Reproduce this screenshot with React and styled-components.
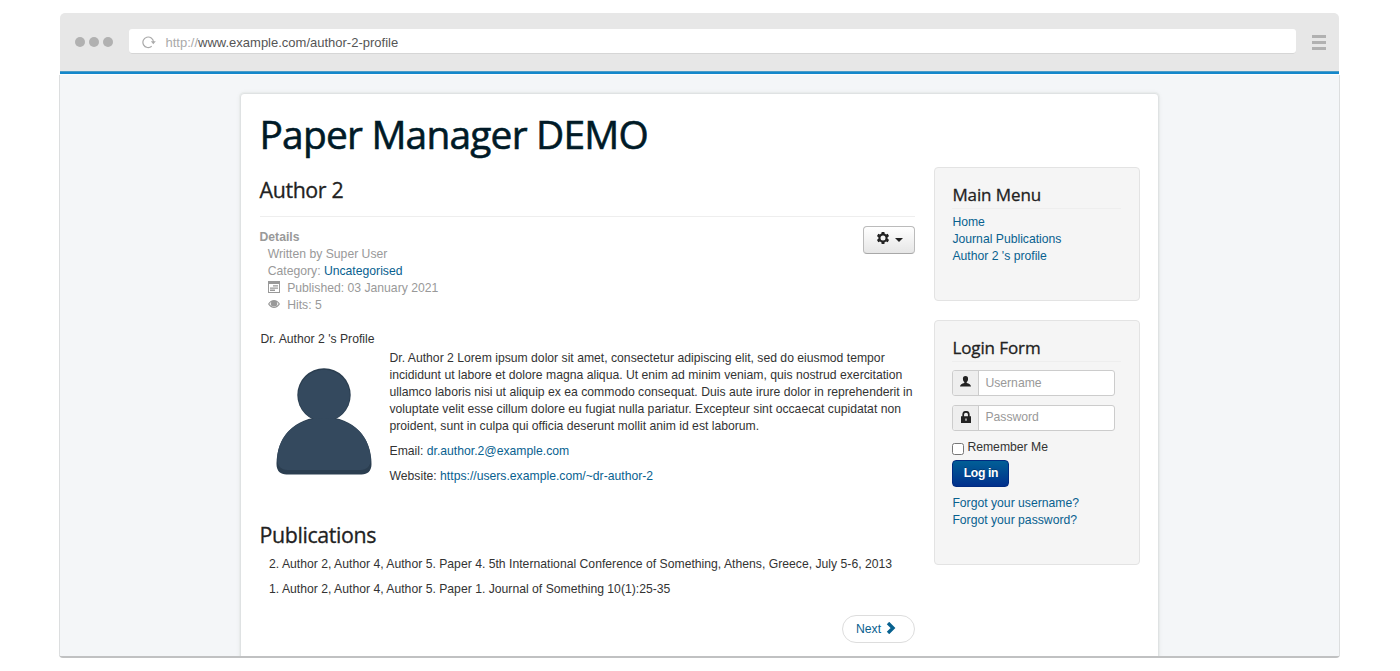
import React from 'react';
import styled, { createGlobalStyle } from 'styled-components';

const link = '#08618f';
const sans = '"Liberation Sans", Arial, Helvetica, sans-serif';
const heading = '"Open Sans", sans-serif';

const Global = createGlobalStyle`
  *, *::before, *::after { box-sizing: border-box; }
  html, body { margin: 0; background: #fff; }
  body { height: 671px; overflow: hidden; font: 12.2px/16.9px ${sans}; color: #333; }
  a { color: ${link}; text-decoration: none; }
  svg { display: block; flex: none; }
  p { margin: 0; white-space: nowrap; }
`;

const Browser = styled.div`
  width: 1281px;
  height: 645px;
  margin: 13px 0 0 59px;
  display: flex;
  flex-direction: column;
  border-bottom: 2px solid #c0c1c2;
  border-radius: 5px 5px 4px 4px;
  overflow: hidden;
`;
const Toolbar = styled.header`
  height: 58px;
  flex: none;
  margin: 0 1px;
  display: flex;
  align-items: center;
  padding: 0 13px 2px 15px;
  background: #e7e7e7;
  border-radius: 5px 5px 0 0;
`;
const Dots = styled.div`
  display: flex;
  gap: 4px;
  margin: 2px 16px 0 0;
`;
const Dot = styled.i`
  width: 10px;
  height: 10px;
  border-radius: 50%;
  background: #b1b1b1;
`;
const Address = styled.div`
  flex: 1;
  height: 25px;
  display: flex;
  align-items: center;
  padding: 1px 0 0 13px;
  background: #fff;
  border-radius: 3px;
  box-shadow: inset 0 -1px 0 #d6d6d6;
  font-size: 13px;
  color: #555;
`;
const Url = styled.span`
  margin-left: 9.5px;
  padding-top: 3px;
`;
const Scheme = styled.span`
  color: #aaa;
`;
const Burger = styled.div`
  width: 14px;
  height: 15px;
  margin: 2px 0 0 16px;
  border-top: 3px solid #b1b1b1;
  border-bottom: 3px solid #b1b1b1;
  display: flex;
  align-items: center;
  &::before { content: ''; width: 14px; height: 3px; background: #b1b1b1; }
`;

const Viewport = styled.div`
  flex: 1;
  min-height: 0;
  display: flex;
  justify-content: center;
  padding-top: 18px;
  background: #f4f6f8;
  border: 1px solid #dcdedf;
  border-width: 0 1px;
  overflow: hidden;
`;
const Accent = styled.div`
  flex: none;
  height: 4px;
  margin: 0 1px;
  background: #1387cb;
  border-top: 1px solid #4a9cc6;
  border-bottom: 1px solid #fbfcfd;
`;
const Card = styled.div`
  width: 919px;
  height: 600px;
  flex: none;
  padding: 19px 19px 0 18.5px;
  background: #fff;
  border: 1px solid #dfe2e3;
  border-radius: 4px;
  box-shadow: 0 0 0 1px #e9ecec, 0 0 5px rgba(0, 0, 0, 0.06);
`;
const SiteTitle = styled.h1`
  margin: 0 0 12px;
  font: 400 38.9px/41px ${heading};
  letter-spacing: -0.79px;
  color: #001a27;
  -webkit-text-stroke: 0.6px #001a27;
  white-space: nowrap;
`;
const Columns = styled.div`
  display: flex;
  align-items: flex-start;
  justify-content: space-between;
`;
const Main = styled.main`
  width: 655px;
`;
const PageHeader = styled.div`
  height: 51px;
  padding-top: 5px;
  border-bottom: 1px solid #eee;
`;
const Heading = styled.h2`
  margin: 0;
  font: 400 21.4px/38px ${heading};
  letter-spacing: -0.38px;
  color: #222;
  -webkit-text-stroke: 0.3px #222;
  white-space: nowrap;
`;
const Meta = styled.section`
  display: flex;
  justify-content: space-between;
  align-items: flex-start;
  height: 114px;
  padding-top: 9px;
`;
const Details = styled.dl`
  margin: 3px 0 0;
  color: #999;
`;
const Term = styled.dt`
  font-weight: 700;
`;
const Detail = styled.dd`
  margin: 0 0 0 8.2px;
  display: flex;
  white-space: pre;
  svg { margin: ${(p) => p.$iconTop || 0} 7.5px 0 0; }
`;
const GearButton = styled.button`
  width: 52px;
  height: 28px;
  display: flex;
  align-items: center;
  gap: 6px;
  padding: 0 11px 4px 13px;
  border: 1px solid #bbb;
  border-bottom-color: #a8a8a8;
  border-radius: 4px;
  background: linear-gradient(#fff, #e6e6e6);
`;
const Caret = styled.i`
  margin-top: 4px;
  border: 4px solid transparent;
  border-width: 4px 4px 0;
  border-top-color: #222;
`;
const Profile = styled.section`
  height: 185px;
`;
const ProfileTitle = styled.p`
  padding-left: 0.9px;
`;
const ProfileBody = styled.div`
  display: flex;
  padding: 2px 0 0 16.5px;
`;
const Portrait = styled.div`
  width: 113.500px;
  padding-top: 18px;
`;
const Bio = styled.div`
  display: flex;
  flex-direction: column;
  gap: 8.4px;
`;
const Line = styled.span`
  display: block;
`;
const Publications = styled.ul`
  margin: 2px 0 0;
  padding: 0 0 0 9.5px;
  list-style: none;
  display: flex;
  flex-direction: column;
  gap: 8.4px;
  letter-spacing: 0.004px;
  white-space: nowrap;
`;
const Pager = styled.nav`
  display: flex;
  justify-content: flex-end;
  margin-top: 17px;
`;
const NextLink = styled.a`
  width: 73px;
  height: 28px;
  display: flex;
  align-items: center;
  gap: 5px;
  padding-left: 13.5px;
  border: 1px solid #ddd;
  border-radius: 14px;
  svg { margin-top: -2px; }
`;
const Aside = styled.aside`
  width: 206px;
  margin: 1px -1px 0 0;
  display: flex;
  flex-direction: column;
  gap: 19px;
`;
const Well = styled.section`
  height: ${(p) => p.$h}px;
  padding: 16px 18px 0 17.4px;
  background: #f5f5f5;
  border: 1px solid #e3e3e3;
  border-radius: 4px;
`;
const WellTitle = styled.h3`
  margin: 0 0 ${(p) => p.$gap || 5}px;
  height: 25px;
  border-bottom: 1px solid #eee;
  font: 400 17px/21px ${heading};
  letter-spacing: -0.1px;
  color: #222;
  -webkit-text-stroke: 0.3px #222;
  white-space: nowrap;
`;
const Links = styled.nav`
  display: flex;
  flex-direction: column;
  align-items: flex-start;
  white-space: nowrap;
`;
const Field = styled.label`
  width: 163px;
  height: 26px;
  display: flex;
  margin-bottom: 8.5px;
  border: 1px solid #ccc;
  border-radius: 3px;
  background: #fff;
  overflow: hidden;
`;
const AddOn = styled.span`
  width: 26px;
  display: flex;
  justify-content: center;
  padding-top: 5px;
  background: #eee;
  border-right: 1px solid #ccc;
`;
const Input = styled.input`
  flex: 1;
  min-width: 0;
  padding: 0 6px;
  border: 0;
  background: transparent;
  font: 12.2px/16.9px ${sans};
  &::placeholder { color: #999; }
`;
const Remember = styled.label`
  display: flex;
  height: 18px;
  white-space: nowrap;
`;
const Checkbox = styled.input`
  appearance: none;
  width: 12px;
  height: 12px;
  margin: 4px 3px 0 0;
  border: 1px solid #777;
  border-radius: 2.5px;
  background: #fff;
`;
const LoginButton = styled.button`
  width: 57px;
  height: 27px;
  display: block;
  margin: 3px 0 8px;
  padding: 0;
  border: 1px solid #002a80;
  border-radius: 4px;
  background: linear-gradient(#015f96, #01308c);
  color: #fff;
  font: 700 12.2px/16.9px ${sans};
  letter-spacing: -0.4px;
  text-shadow: 0 -1px 0 rgba(0, 0, 0, 0.25);
`;

const Reload = () => (
  <svg width="14" height="14" viewBox="0 0 14 14" fill="none" stroke="#aaa" strokeWidth="1.2">
    <path d="M9.7 11.3A5.3 5.3 0 1 1 11.500 7" />
    <path d="M8.800 6.300h5L11.300 9.300z" fill="#aaa" stroke="none" />
  </svg>
);
const CalendarIcon = () => (
  <svg width="12" height="12" viewBox="0 0 12 12">
    <path d="M0 0h12v12H0zM1 3v8h10V3z" fill="#999" fillRule="evenodd" />
    <path d="M5 4.2h5v1.3H5zM2 6.4h8v1.3H2zM2 8.6h5v1.3H2z" fill="#999" />
  </svg>
);
const EyeIcon = () => (
  <svg width="12" height="8" viewBox="0 0 12 8">
    <path d="M0 4Q2.5.1 6 .1T12 4Q9.500 7.900 6 7.900T0 4zM1.400 4Q3 6.700 6 6.700T10.600 4Q9.900 2.700 8.700 2A3.200 3.200 0 1 1 3.300 2Q2.100 2.700 1.400 4z" fill="#999" fillRule="evenodd" />
    <circle cx="6" cy="3.700" r="2.200" fill="#999" />
  </svg>
);
const GearIcon = () => (
  <svg width="12" height="12" viewBox="0 0 12 12" fill="none" stroke="#222">
    <circle cx="6" cy="6" r="3.600" strokeWidth="2.200" />
    <path d="M6 0v2M6 10v2M.6 2.900l1.900 1.100M9.500 8l1.900 1.100M.6 9.100l1.900-1.100M9.500 4l1.900-1.100" strokeWidth="2.900" />
  </svg>
);
const UserIcon = () => (
  <svg width="11" height="11" viewBox="0 0 11 11" fill="#222">
    <path d="M5.500 0C7.300 0 8.200 1.200 8.100 3 8 4.600 7.400 5.500 6.700 6v1.100c2.500.5 4.100 1.500 4.300 3.400H0C.2 8.600 1.800 7.600 4.300 7.100V6C3.600 5.500 3 4.600 2.900 3 2.800 1.200 3.700 0 5.500 0z" />
  </svg>
);
const LockIcon = () => (
  <svg width="10" height="12" viewBox="0 0 10 12">
    <path d="M2.200 6V3.600a2.800 2.800 0 0 1 5.600 0V6" fill="none" stroke="#222" strokeWidth="1.700" />
    <path d="M0 5.200h10V12H0zM4.400 7.400v2.400h1.200V7.400z" fill="#222" fillRule="evenodd" />
  </svg>
);
const Chevron = () => (
  <svg width="10" height="12" viewBox="0 0 10 12">
    <path d="M2 1l5 5-5 5" fill="none" stroke={link} strokeWidth="3.400" />
  </svg>
);
const Avatar = () => (
  <svg width="96" height="108" viewBox="0 0 96 108">
    <g fill="#2b3e50">
      <circle cx="48" cy="27" r="26.700" />
      <path d="M.5 96C.5 70 18 49 48 49s47.500 21 47.500 47c0 7-4 10.500-10 10.500h-75C4.500 106.500.5 103 .5 96z" />
    </g>
    <g fill="#34495e">
      <circle cx="48" cy="27.500" r="25.700" />
      <path d="M1.300 91C2 67 20 50 48 50s46 17 46.700 41c0 7-4 11-10 11H11.300c-6 0-10-4-10-11z" />
    </g>
  </svg>
);

export default function App() {
  return (
    <>
      <Global />
      <Browser>
        <Toolbar>
          <Dots><Dot /><Dot /><Dot /></Dots>
          <Address>
            <Reload />
            <Url><Scheme>http://</Scheme>www.example.com/author-2-profile</Url>
          </Address>
          <Burger />
        </Toolbar>
        <Accent />
        <Viewport>
          <Card>
            <SiteTitle>Paper Manager DEMO</SiteTitle>
            <Columns>
              <Main>
                <PageHeader><Heading>Author 2</Heading></PageHeader>
                <Meta>
                  <Details>
                    <Term>Details</Term>
                    <Detail>Written by Super User</Detail>
                    <Detail>Category: <a href="#category">Uncategorised</a></Detail>
                    <Detail $iconTop="1px"><CalendarIcon />Published: 03 January 2021</Detail>
                    <Detail $iconTop="3px"><EyeIcon />Hits: 5</Detail>
                  </Details>
                  <GearButton><GearIcon /><Caret /></GearButton>
                </Meta>
                <Profile>
                  <ProfileTitle>Dr. Author 2 's Profile</ProfileTitle>
                  <ProfileBody>
                    <Portrait><Avatar /></Portrait>
                    <Bio>
                      <p>
                        <Line>Dr. Author 2 Lorem ipsum dolor sit amet, consectetur adipiscing elit, sed do eiusmod tempor</Line>
                        <Line>incididunt ut labore et dolore magna aliqua. Ut enim ad minim veniam, quis nostrud exercitation</Line>
                        <Line>ullamco laboris nisi ut aliquip ex ea commodo consequat. Duis aute irure dolor in reprehenderit in</Line>
                        <Line>voluptate velit esse cillum dolore eu fugiat nulla pariatur. Excepteur sint occaecat cupidatat non</Line>
                        <Line>proident, sunt in culpa qui officia deserunt mollit anim id est laborum.</Line>
                      </p>
                      <p>Email: <a href="#email">dr.author.2@example.com</a></p>
                      <p>Website: <a href="#website">https://users.example.com/~dr-author-2</a></p>
                    </Bio>
                  </ProfileBody>
                </Profile>
                <Heading>Publications</Heading>
                <Publications>
                  <li>2. Author 2, Author 4, Author 5. Paper 4. 5th International Conference of Something, Athens, Greece, July 5-6, 2013</li>
                  <li>1. Author 2, Author 4, Author 5. Paper 1. Journal of Something 10(1):25-35</li>
                </Publications>
                <Pager><NextLink href="#next">Next <Chevron /></NextLink></Pager>
              </Main>
              <Aside>
                <Well $h={134}>
                  <WellTitle>Main Menu</WellTitle>
                  <Links>
                    <a href="#home">Home</a>
                    <a href="#journal">Journal Publications</a>
                    <a href="#author">Author 2 's profile</a>
                  </Links>
                </Well>
                <Well $h={245}>
                  <WellTitle $gap={8}>Login Form</WellTitle>
                  <Field><AddOn><UserIcon /></AddOn><Input placeholder="Username" /></Field>
                  <Field><AddOn><LockIcon /></AddOn><Input placeholder="Password" /></Field>
                  <Remember><Checkbox type="checkbox" />Remember Me</Remember>
                  <LoginButton>Log in</LoginButton>
                  <Links>
                    <a href="#username">Forgot your username?</a>
                    <a href="#password">Forgot your password?</a>
                  </Links>
                </Well>
              </Aside>
            </Columns>
          </Card>
        </Viewport>
      </Browser>
    </>
  );
}
